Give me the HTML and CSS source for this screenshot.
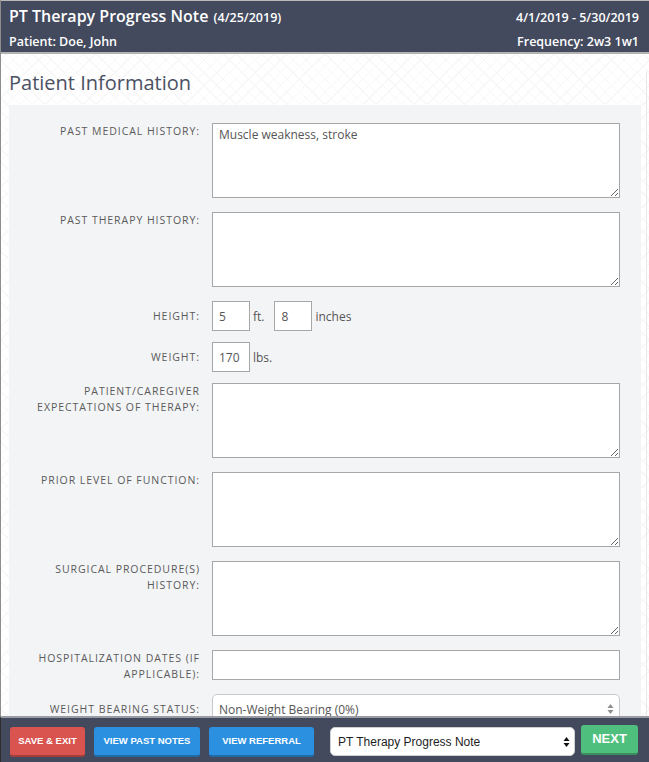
FILE: index.html
```html
<!DOCTYPE html>
<html lang="en">
<head>
<meta charset="utf-8">
<title>PT Therapy Progress Note</title>
<link rel="stylesheet" href="styles.css">
</head>
<body>
<div class="app">
  <header class="topbar">
    <div class="topbar-row">
      <div class="title">PT Therapy Progress Note <span class="date">(4/25/2019)</span></div>
      <div class="meta">4/1/2019 - 5/30/2019</div>
    </div>
    <div class="topbar-row second">
      <div class="meta">Patient: Doe, John</div>
      <div class="meta">Frequency: 2w3 1w1</div>
    </div>
  </header>

  <main class="content">
    <h1 class="section-title">Patient Information</h1>
    <div class="panel">
      <div class="row">
        <label class="label">Past Medical History:</label>
        <textarea class="area">Muscle weakness, stroke</textarea>
      </div>
      <div class="row">
        <label class="label">Past Therapy History:</label>
        <textarea class="area"></textarea>
      </div>
      <div class="row short centered">
        <label class="label">Height:</label>
        <div class="inline">
          <input class="num" type="text" value="5"><span class="unit">ft.</span>
          <input class="num" type="text" value="8"><span class="unit">inches</span>
        </div>
      </div>
      <div class="row short centered">
        <label class="label">Weight:</label>
        <div class="inline">
          <input class="num" type="text" value="170"><span class="unit">lbs.</span>
        </div>
      </div>
      <div class="row">
        <label class="label">Patient/Caregiver Expectations of Therapy:</label>
        <textarea class="area"></textarea>
      </div>
      <div class="row">
        <label class="label">Prior Level of Function:</label>
        <textarea class="area"></textarea>
      </div>
      <div class="row">
        <label class="label">Surgical Procedure(s) History:</label>
        <textarea class="area"></textarea>
      </div>
      <div class="row tight">
        <label class="label">Hospitalization Dates (If Applicable):</label>
        <input class="text" type="text" value="">
      </div>
      <div class="row centered">
        <label class="label">Weight Bearing Status:</label>
        <div class="select-wrap">
          <select class="select">
            <option>Non-Weight Bearing (0%)</option>
          </select>
          <svg class="arrows" width="7" height="12" viewBox="0 0 7 12"><path d="M3.5 1 L6.5 5 H0.5 Z M3.5 11 L6.5 7 H0.5 Z" fill="#8e8e8e"/></svg>
        </div>
      </div>
    </div>
  </main>

  <footer class="actions">
    <button class="btn red">Save &amp; Exit</button>
    <button class="btn blue">View Past Notes</button>
    <button class="btn blue">View Referral</button>
    <div class="select-wrap footer-select">
      <select class="select dark">
        <option>PT Therapy Progress Note</option>
      </select>
      <svg class="arrows" width="7" height="12" viewBox="0 0 7 12"><path d="M3.5 1 L6.5 5 H0.5 Z M3.5 11 L6.5 7 H0.5 Z" fill="#111"/></svg>
    </div>
    <button class="btn green">Next</button>
  </footer>
</div>
</body>
</html>
```

FILE: styles.css
```css
* { box-sizing: border-box; }

html, body {
  margin: 0;
  padding: 0;
  height: 100%;
  overflow: hidden;
}

body {
  font-family: "Open Sans", "Liberation Sans", sans-serif;
  color: #555;
  background: #fff;
}

.app {
  min-height: 100%;
  border-left: 1px solid #8d8d8d;
  background-color: #fff;
  background-image:
    repeating-linear-gradient(45deg, transparent 0 8px, #f7f7f7 8px 9px),
    repeating-linear-gradient(-45deg, transparent 0 8px, #f7f7f7 8px 9px);
}

/* ---------- top bar ---------- */
.topbar {
  background: #434a5e;
  border-top: 1px solid #b9b9b9;
  border-bottom: 2px solid #b3b3b3;
  padding: 5px 10px 0 8px;
  height: 54px;
  color: #fff;
}

.topbar-row {
  display: flex;
  justify-content: space-between;
  align-items: baseline;
  line-height: 20px;
  height: 20px;
}

.topbar-row.second {
  margin-top: 7px;
  line-height: 18px;
  height: 18px;
}

.title {
  font-size: 16px;
  font-weight: 600;
}

.title .date {
  font-size: 12.5px;
  font-weight: 600;
  margin-left: 1px;
}

.meta {
  font-size: 12.5px;
  font-weight: 600;
}

/* ---------- content ---------- */
.content {
  padding: 0 5px 0 8px;
  margin-right: 2px;
  border-right: 1px solid #e8e8e8;
}

.section-title {
  margin: 17px 0 10px;
  font-size: 20px;
  line-height: 24px;
  font-weight: 400;
  color: #4b5163;
}

.panel {
  background: #f3f4f6;
  padding: 18px 20px 60px 0;
}

.row {
  display: grid;
  grid-template-columns: 191px 408px;
  column-gap: 12px;
  align-items: start;
  margin-bottom: 14px;
}

.row.short { margin-bottom: 11px; }
.row.tight { margin-bottom: 12px; }
.row.centered { align-items: center; }

.label {
  text-align: right;
  text-transform: uppercase;
  font-size: 10.5px;
  letter-spacing: 0.95px;
  line-height: 16px;
  color: #5a5a5a;
}

.area {
  display: block;
  width: 408px;
  height: 75px;
  margin: 0;
  padding: 2px 6px;
  font-family: "Open Sans", "Liberation Sans", sans-serif;
  font-size: 12px;
  line-height: 17px;
  color: #555;
  background: #fff;
  border: 1px solid #a7a7a7;
  border-radius: 0;
  resize: vertical;
}

.inline {
  display: flex;
  align-items: center;
}

.num, .text {
  height: 30px;
  margin: 0;
  padding: 0 6px;
  font-family: "Open Sans", "Liberation Sans", sans-serif;
  font-size: 12px;
  color: #555;
  background: #fff;
  border: 1px solid #a7a7a7;
  border-radius: 0;
  outline: none;
}

.num { width: 38px; }
.text { width: 408px; display: block; }

.unit {
  font-size: 12px;
  color: #555;
  margin: 0 10px 0 3px;
}

.select-wrap {
  position: relative;
  width: 408px;
}

.select {
  display: block;
  width: 100%;
  height: 30px;
  margin: 0;
  padding: 0 20px 0 6px;
  -webkit-appearance: none;
  appearance: none;
  font-family: "Open Sans", "Liberation Sans", sans-serif;
  font-size: 12px;
  color: #555;
  background: #fff;
  border: 1px solid #c9c9c9;
  border-radius: 5px;
}

.arrows {
  position: absolute;
  right: 6px;
  top: 9px;
}

/* ---------- footer ---------- */
.actions {
  position: fixed;
  left: 0;
  right: 0;
  bottom: 0;
  height: 46px;
  background: #434a5e;
  border-top: 2px solid #9a9ca3;
  border-left: 1px solid #2e2e2e;
  display: flex;
  align-items: flex-start;
  padding: 7px 11px 0 9px;
}

.btn {
  height: 30px;
  margin: 2px 9px 0 0;
  padding: 0 0 2px;
  border: 0;
  border-bottom: 2px solid rgba(0, 0, 0, 0.25);
  border-radius: 3px;
  font-family: "Liberation Sans", Arial, sans-serif;
  font-weight: 700;
  font-size: 9.5px;
  text-transform: uppercase;
  color: #fff;
}

.btn.red { background: #d9534f; width: 75px; }
.btn.blue { background: #2b90e0; width: 106px; }
.btn.blue + .btn.blue { width: 105px; margin-right: 16px; }

.footer-select {
  width: 245px;
  margin-top: 2px;
}

.select.dark {
  height: 29px;
  font-family: "Liberation Sans", Arial, sans-serif;
  font-size: 12px;
  color: #1e1e1e;
  border: 1px solid #d0d0d0;
  padding-left: 7px;
}

.footer-select .arrows { top: 9px; right: 5px; }

.btn.green {
  background: #4fbf7d;
  width: 57px;
  margin: 0 0 0 6px;
  font-size: 13px;
}
```
